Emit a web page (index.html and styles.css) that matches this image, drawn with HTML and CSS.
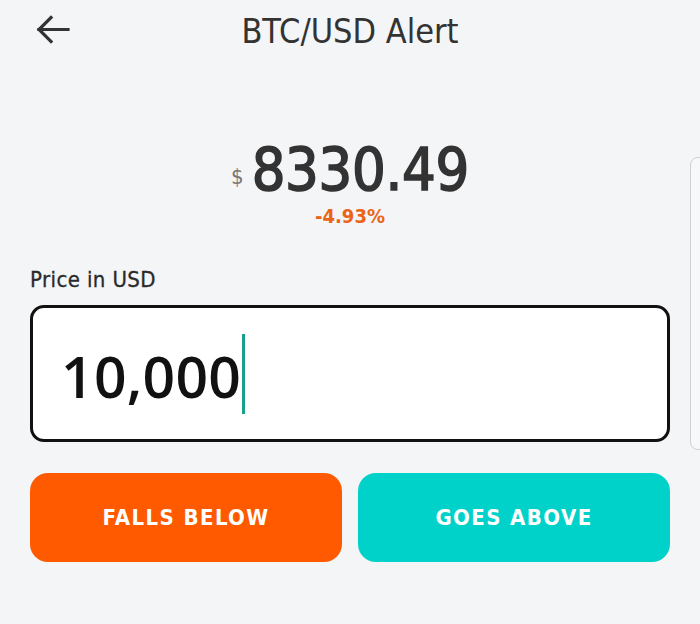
FILE: index.html
```html
<!doctype html>
<html lang="en">
  <head>
    <meta charset="UTF-8" />
    <meta name="viewport" content="width=device-width, initial-scale=1.0" />
    <title>BTC/USD Alert</title>
    <link rel="stylesheet" href="styles.css">
  </head>
  <body>
    <div class="screen">
      <header class="topbar">
        <button class="back-btn" aria-label="Back">
          <svg width="34" height="30" viewBox="0 0 34 30" fill="none" stroke="#333" stroke-width="3.2" stroke-linecap="square">
            <path d="M3 14.5 H32" />
            <path d="M15 2.5 L3 14.5 L15 26.5" stroke-linejoin="miter" />
          </svg>
        </button>
        <h1>BTC/USD Alert</h1>
        <div></div>
      </header>

      <section class="quote">
        <div class="price">
          <span class="currency">$</span>
          <span class="amount">8330.49</span>
        </div>
        <div class="change">-4.93%</div>
      </section>

      <form class="alert-form">
        <label class="field-label">Price in USD</label>
        <div class="price-input">
          <span class="value">10,000</span>
          <span class="caret"></span>
        </div>
        <div class="actions">
          <button type="button" class="btn btn-below">FALLS BELOW</button>
          <button type="button" class="btn btn-above">GOES ABOVE</button>
        </div>
      </form>

      <!-- next card peeking in from the right -->
      <div class="peek-card"></div>
    </div>
  </body>
</html>
```

FILE: styles.css
```css
* {
  margin: 0;
  padding: 0;
  box-sizing: border-box;
}

body {
  font-family: 'DejaVu Sans Condensed', 'DejaVu Sans', sans-serif;
  background: #f4f5f7;
  color: #333;
  overflow: hidden;
}

.screen {
  position: relative;
  width: 700px;
  height: 624px;
  padding: 0 30px;
}

.topbar {
  display: grid;
  grid-template-columns: 1fr auto 1fr;
  align-items: center;
  height: 62px;
}

.back-btn {
  background: none;
  border: none;
  width: 34px;
  height: 30px;
  margin-left: 6px;
  margin-top: -2px;
  cursor: pointer;
}

.topbar h1 {
  font-size: 34px;
  font-weight: normal;
  color: #333;
  line-height: 1;
}

.quote {
  margin-top: 78px;
  text-align: center;
}

.price {
  display: flex;
  justify-content: center;
  align-items: baseline;
  line-height: 1;
}

.currency {
  font-size: 22px;
  color: #777;
  margin-right: 8px;
  position: relative;
  top: -6px;
}

.amount {
  font-size: 59px;
  color: #333;
  -webkit-text-stroke: 1.6px #333;
  letter-spacing: -0.3px;
}

.change {
  margin-top: 7px;
  font-size: 20px;
  line-height: 1;
  font-weight: bold;
  color: #ea6417;
}

.alert-form {
  margin-top: 43px;
}

.field-label {
  display: block;
  font-size: 22px;
  line-height: 1;
  letter-spacing: 0.4px;
  color: #2a2a2a;
  -webkit-text-stroke: 0.3px #2a2a2a;
}

.price-input {
  margin-top: 14px;
  height: 137px;
  border: 3px solid #111;
  border-radius: 14px;
  background: #fff;
  display: flex;
  align-items: center;
  padding-left: 28px;
}

.price-input .value {
  font-family: 'Open Sans', 'Noto Sans', sans-serif;
  font-size: 57px;
  font-weight: 600;
  line-height: 1;
  letter-spacing: 0.3px;
  color: #111;
  padding-top: 6px;
}

.caret {
  width: 3px;
  height: 80px;
  margin-left: 1px;
  background: #18a08d;
}

.actions {
  display: grid;
  grid-template-columns: 1fr 1fr;
  gap: 16px;
  margin-top: 31px;
}

.btn {
  height: 89px;
  border: none;
  border-radius: 18px;
  font-family: 'DejaVu Sans Condensed', 'DejaVu Sans', sans-serif;
  font-size: 22px;
  font-weight: bold;
  letter-spacing: 1.4px;
  color: #fff;
  cursor: pointer;
}

.btn-below {
  background: #ff5a00;
}

.btn-above {
  background: #00d2c9;
}

.peek-card {
  position: absolute;
  left: 690px;
  top: 157px;
  width: 40px;
  height: 293px;
  border: 1px solid #cfd1d4;
  border-radius: 8px;
  background: #f7f8f9;
}
```
